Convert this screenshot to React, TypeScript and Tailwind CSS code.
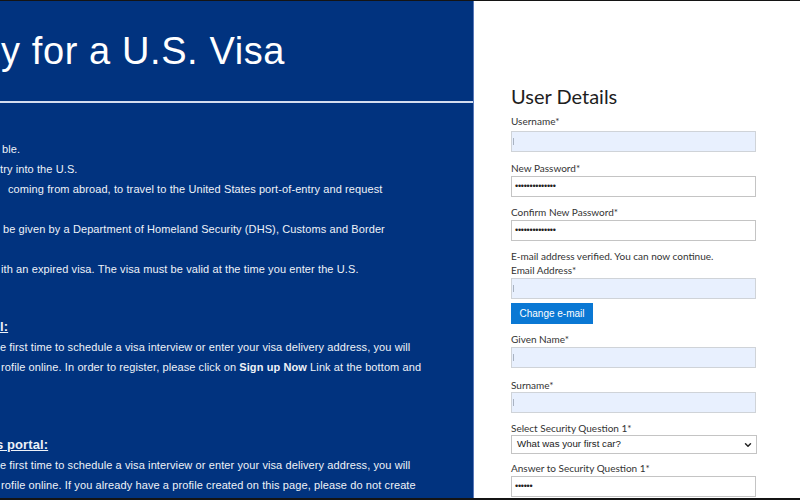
import { ChevronDown } from 'lucide-react';

const arial = { fontFamily: '"Liberation Sans", Arial, sans-serif' };
const lato = { fontFamily: 'Lato, "Noto Sans", sans-serif' };

function Label({ text, className = '' }: { text: string; className?: string }) {
  return <div className={`text-[10px] leading-[14px] text-[#333] ${className}`}>{text}</div>;
}

function FilledInput() {
  // autofilled field, light blue with a caret mark
  return (
    <div className="h-[21px] w-[245px] bg-[#e8f0fe] border border-[#cfd3d8] flex items-center pl-[1px]">
      <span className="w-px h-[7px] bg-[#a9b3c2]" />
    </div>
  );
}

function PasswordInput({ count }: { count: number }) {
  return (
    <div className="h-[21px] w-[245px] bg-white border border-[#c4c4c4] flex items-center pl-[3px]">
      <span className="text-[9px] tracking-[-0.25px] text-[#222] leading-none" style={arial}>
        {'•'.repeat(count)}
      </span>
    </div>
  );
}

export default function App() {
  return (
    <div className="w-[800px] h-[500px] flex overflow-hidden border-t border-b-2 border-[#141414] bg-white">
      {/* Left info panel */}
      <div className="w-[474px] shrink-0 bg-[#01337f] border-r border-[#5878b8] text-white" style={arial}>
        <h1 className="pt-[28px] pl-px text-[38px] leading-[44px] tracking-[0.6px] whitespace-nowrap">
          y for a U.S. Visa
        </h1>
        <div className="mt-[28px] h-[2px] bg-[#d3ddef]" />

        <div className="mt-[36px] text-[11px] leading-[20px] tracking-[0.1px] text-[#eef2f8] whitespace-nowrap">
          <div className="pl-[2px]">ble.</div>
          <div>try into the U.S.</div>
          <div className="pl-[8px]">coming from abroad, to travel to the United States port-of-entry and request</div>
          <div className="h-[20px]" />
          <div className="pl-[3px]">be given by a Department of Homeland Security (DHS), Customs and Border</div>
          <div className="h-[20px]" />
          <div className="pl-[1px]">ith an expired visa. The visa must be valid at the time you enter the U.S.</div>

          <div className="mt-[38px] text-[13px] font-bold underline">l:</div>
          <div>e first time to schedule a visa interview or enter your visa delivery address, you will</div>
          <div className="pl-[1px]">
            rofile online. In order to register, please click on <b>Sign up Now</b> Link at the bottom and
          </div>

          <div className="mt-[58px] -ml-[4px] text-[13px] font-bold underline">s portal:</div>
          <div>e first time to schedule a visa interview or enter your visa delivery address, you will</div>
          <div className="pl-[1px]">
            rofile online. If you already have a profile created on this page, please do not create
          </div>
        </div>
      </div>

      {/* Right form panel */}
      <div className="flex-1 pl-[37px] pt-[83px]" style={lato}>
        <h2 className="text-[20px] leading-[24px] text-[#1e1e1e]">User Details</h2>

        <Label text="Username*" className="mt-[6px] mb-[3px]" />
        <FilledInput />

        <Label text="New Password*" className="mt-[9px] mb-[1px]" />
        <PasswordInput count={14} />

        <Label text="Confirm New Password*" className="mt-[8px] mb-[1px]" />
        <PasswordInput count={14} />

        <Label text="E-mail address verified. You can now continue." className="mt-[8px]" />
        <Label text="Email Address*" className="mb-[1px]" />
        <FilledInput />
        <button
          className="mt-[4px] h-[21px] w-[82px] bg-[#0a78d4] text-white text-[10px] flex items-center justify-center"
          style={arial}
        >
          Change e-mail
        </button>

        <Label text="Given Name*" className="mt-[8px] mb-[1px]" />
        <FilledInput />

        <Label text="Surname*" className="mt-[10px]" />
        <FilledInput />

        <Label text="Select Security Question 1*" className="mt-[8px]" />
        <div className="h-[19px] w-[246px] bg-white border border-[#c4c4c4] flex items-center justify-between pl-[5px] pr-[3px]">
          <span className="text-[9.7px] text-[#1a1a1a]" style={arial}>What was your first car?</span>
          <ChevronDown size={10} strokeWidth={3.5} className="text-[#222]" />
        </div>

        <Label text="Answer to Security Question 1*" className="mt-[7px] mb-[1px]" />
        <PasswordInput count={6} />
      </div>
    </div>
  );
}
